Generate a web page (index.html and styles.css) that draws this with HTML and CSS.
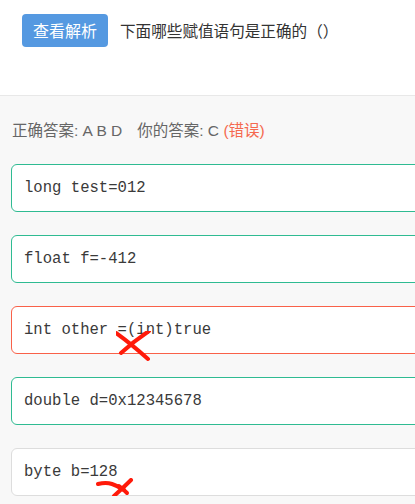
FILE: index.html
```html
<!DOCTYPE html>
<html lang="zh">
<head>
<meta charset="utf-8">
<title>题目</title>
<link rel="stylesheet" href="styles.css">
</head>
<body>
<header class="head">
  <button class="btn">查看解析</button>
  <div class="question">下面哪些赋值语句是正确的（）</div>
</header>
<main class="main">
  <div class="answer">正确答案: A B D<span class="gap"></span>你的答案: C <span class="wrong">(错误)</span></div>
  <div class="options">
    <div class="opt ok">long test=012</div>
    <div class="opt ok">float f=-412</div>
    <div class="opt bad">int other =(int)true
      <svg class="mark m1" width="40" height="36" viewBox="0 0 40 36"><path d="M0 2 Q14 12 32 28" /><path d="M33 0 Q18 10 5 22" /></svg>
    </div>
    <div class="opt ok">double d=0x12345678</div>
    <div class="opt plain">byte b=128
      <svg class="mark m2" width="44" height="26" viewBox="0 0 44 26"><path d="M2 6 Q10 4 16 6 Q22 8 28 12" /><path d="M35 2 Q28 9 18 18" /><path d="M23 8 Q27 11 31 15" /></svg>
    </div>
  </div>
</main>
</body>
</html>
```
FILE: styles.css
```css
html, body {
  margin: 0;
  padding: 0;
  overflow: hidden;
  background: #f8f8f8;
}
body {
  font-family: "Liberation Sans", "Noto Sans CJK SC", sans-serif;
  width: 415px;
}
.head {
  box-sizing: border-box;
  height: 96px;
  background: #fff;
  border-bottom: 1px solid #e8e8e8;
  display: flex;
  align-items: flex-start;
  padding: 14px 0 0 22px;
  gap: 12px;
}
.btn {
  border: none;
  background: #5599e1;
  color: #fff;
  font-family: "Noto Sans CJK SC", sans-serif;
  font-size: 16px;
  height: 33px;
  width: 86px;
  padding: 0;
  border-radius: 4px;
  line-height: 33px;
}
.question {
  font-family: "Noto Sans CJK SC", sans-serif;
  font-size: 15.6px;
  color: #333;
  line-height: 33px;
}
.main {
  padding: 25px 0 0 11px;
}
.answer {
  font-size: 15.5px;
  color: #666;
  line-height: 20px;
  padding-left: 1px;
}
.gap {
  display: inline-block;
  width: 15px;
}
.wrong {
  color: #f5694f;
}
.options {
  margin-top: 23px;
  display: flex;
  flex-direction: column;
  gap: 23px;
  width: 440px;
}
.opt {
  position: relative;
  box-sizing: border-box;
  height: 48px;
  background: #fff;
  border: 1px solid #ddd;
  border-radius: 6px;
  padding-left: 12px;
  display: flex;
  align-items: center;
  font-family: "Liberation Mono", monospace;
  font-size: 15.6px;
  color: #3a3a3a;
}
.opt.ok { border-color: #2fbb92; }
.opt.bad { border-color: #f96149; }
.mark {
  position: absolute;
  fill: none;
  stroke: #ff1a0a;
  stroke-width: 4;
  stroke-linecap: round;
}
.m1 { left: 104px; top: 24px; }
.m2 { left: 84px; top: 29px; }
```
